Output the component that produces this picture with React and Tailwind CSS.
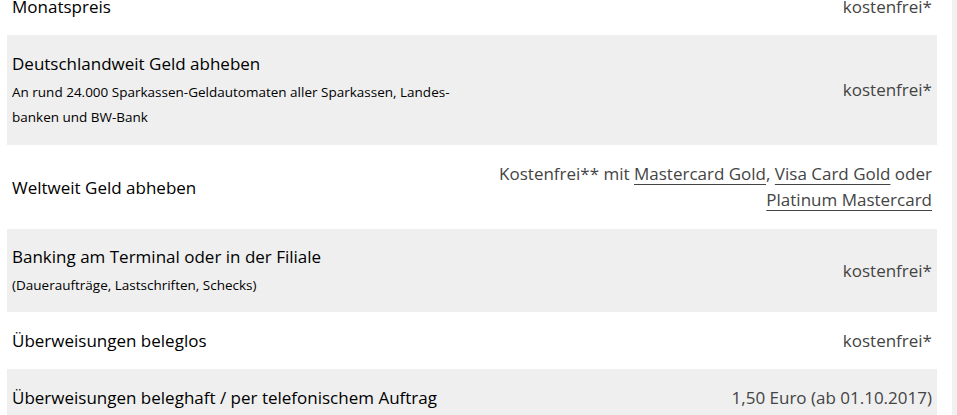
import React from 'react'

const rows = [
  { title: 'Monatspreis', value: 'kostenfrei*', gray: false, h: 'h-[57px]' },
  {
    title: 'Deutschlandweit Geld abheben',
    sub: (
      <>
        An rund 24.000 Sparkassen-Geldautomaten aller Sparkassen, Landes-
        <br />
        banken und BW-Bank
      </>
    ),
    value: 'kostenfrei*',
    gray: true,
    h: 'h-[110px]'
  },
  {
    title: 'Weltweit Geld abheben',
    value: (
      <>
        Kostenfrei** mit <a className="underline underline-offset-[4px] decoration-1">Mastercard Gold</a>,{' '}
        <a className="underline underline-offset-[4px] decoration-1">Visa Card Gold</a> oder
        <br />
        <a className="underline underline-offset-[4px] decoration-1">Platinum Mastercard</a>
      </>
    ),
    gray: false,
    h: 'h-[84px]'
  },
  {
    title: 'Banking am Terminal oder in der Filiale',
    sub: '(Daueraufträge, Lastschriften, Schecks)',
    value: 'kostenfrei*',
    gray: true,
    h: 'h-[83px]'
  },
  { title: 'Überweisungen beleglos', value: 'kostenfrei*', gray: false, h: 'h-[57px]' },
  { title: 'Überweisungen beleghaft / per telefonischem Auftrag', value: '1,50 Euro (ab 01.10.2017)', gray: true, h: 'h-[57px]' }
]

const App = () => {
  return (
    <div className="w-[957px] h-[415px] overflow-hidden bg-white flex font-['Open_Sans',sans-serif]">
      <div className="w-[930px] ml-[7px] -mt-[22px]">
        {rows.map((row, i) => (
          <div
            key={i}
            className={`flex items-center justify-between px-[5px] ${row.h} ${row.gray ? 'bg-[#efefef]' : 'bg-white'}`}
          >
            <div className="w-1/2">
              <div className="text-[17px] leading-[25px] text-black">{row.title}</div>
              {row.sub && (
                <div className="text-[13.5px] leading-[25px] text-black mt-[4px]">{row.sub}</div>
              )}
            </div>
            <div className="w-1/2 text-right text-[17px] leading-[26px] text-[#444]">{row.value}</div>
          </div>
        ))}
      </div>
      <div className="ml-auto w-[5px] h-full bg-[#f1f1f1]"></div>
    </div>
  )
}

export default App
